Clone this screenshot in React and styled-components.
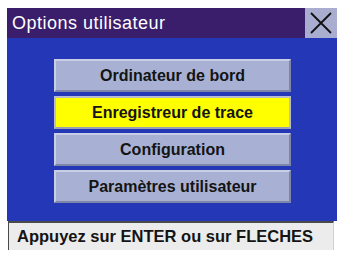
import React from 'react';
import styled, { createGlobalStyle } from 'styled-components';

const GlobalStyle = createGlobalStyle`
  html, body {
    margin: 0;
    padding: 0;
    background: #ffffff;
  }
  body {
    font-family: 'Liberation Sans', Arial, sans-serif;
  }
`;

const Screen = styled.div`
  width: 330px;
  margin: 8px 0 0 7px;
  display: flex;
  flex-direction: column;
`;

const TitleBar = styled.div`
  height: 30px;
  display: flex;
  align-items: center;
  background: #3a1e6c;
`;

const Title = styled.div`
  flex: 1;
  padding-left: 5px;
  color: #ffffff;
  font-size: 18px;
  letter-spacing: 0.5px;
`;

const CloseButton = styled.div`
  width: 32px;
  height: 30px;
  display: flex;
  align-items: center;
  justify-content: center;
  background: #a9aed0;
`;

const Body = styled.div`
  height: 183px;
  background: #2437b6;
  display: flex;
  flex-direction: column;
  gap: 4px;
  padding: 21px 0 0 47px;
  box-sizing: border-box;
`;

const MenuButton = styled.div`
  width: 237px;
  height: 33px;
  box-sizing: border-box;
  display: flex;
  align-items: center;
  justify-content: center;
  font-size: 16px;
  font-weight: bold;
  color: #141414;
  background: ${(p) => (p.selected ? '#ffff00' : '#a8b1d3')};
  border: 2px solid;
  border-color: ${(p) =>
    p.selected ? '#b9bccc #b9bccc #9aa0b8 #b9bccc' : '#c8cee6 #7d86a8 #7d86a8 #c8cee6'};
`;

const StatusBar = styled.div`
  height: 29px;
  width: 326px;
  margin-left: 1px;
  box-sizing: border-box;
  display: flex;
  align-items: center;
  padding-left: 8px;
  background: #ececec;
  border-top: 2px solid #4a4a4a;
  border-left: 1px solid #4a4a4a;
  border-right: 1px solid #cfcfcf;
  font-size: 16.5px;
  font-weight: bold;
  color: #141414;
`;

const items = [
  'Ordinateur de bord',
  'Enregistreur de trace',
  'Configuration',
  'Paramètres utilisateur',
];

export default function App() {
  return (
    <>
      <GlobalStyle />
      <Screen>
        <TitleBar>
          <Title>Options utilisateur</Title>
          <CloseButton>
            <svg width="24" height="24" viewBox="0 0 24 24">
              <path d="M2 2 L22 22 M22 2 L2 22" stroke="#111" strokeWidth="1.8" />
            </svg>
          </CloseButton>
        </TitleBar>
        <Body>
          {items.map((label, i) => (
            <MenuButton key={label} selected={i === 1}>
              {label}
            </MenuButton>
          ))}
        </Body>
        <StatusBar>Appuyez sur ENTER ou sur FLECHES</StatusBar>
      </Screen>
    </>
  );
}
